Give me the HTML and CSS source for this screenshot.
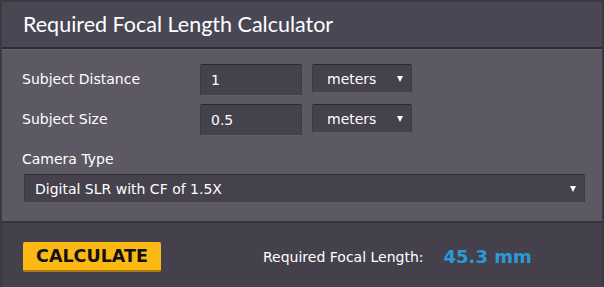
FILE: index.html
```html
<!DOCTYPE html>
<html>
<head>
  <title>Required Focal Length Calculator</title>
  <link rel="stylesheet" href="styles.css">
</head>
<body>
<div class="calc">
  <div class="calc-head">Required Focal Length Calculator</div>
  <div class="calc-body">
    <div class="row">
      <label class="lbl">Subject Distance</label>
      <input class="num" type="text" value="1">
      <span class="sel sel-unit"><select><option>meters</option><option>feet</option></select></span>
    </div>
    <div class="row">
      <label class="lbl">Subject Size</label>
      <input class="num" type="text" value="0.5">
      <span class="sel sel-unit"><select><option>meters</option><option>feet</option></select></span>
    </div>
    <div class="cam-lbl">Camera Type</div>
    <span class="sel sel-wide"><select><option>Digital SLR with CF of 1.5X</option></select></span>
  </div>
  <div class="calc-foot">
    <button class="btn">CALCULATE</button>
    <span class="res-lbl">Required Focal Length:</span>
    <span class="res-val">45.3 mm</span>
  </div>
</div>
</body>
</html>
```

FILE: styles.css
```css
* { box-sizing: border-box; }

html, body { margin: 0; padding: 0; }
body {
  background: #3c3a41;
  padding: 2px 0 0 2px;
  font-family: "DejaVu Sans", Verdana, sans-serif;
  color: #fff;
}

.calc { width: 600px; background: #5c5864; }

.calc-head {
  height: 47px;
  background: #4a4755;
  border-bottom: 2px solid #2e2c33;
  padding: 0 0 0 21px;
  font-family: Lato, "Open Sans", sans-serif;
  font-size: 21.5px;
  line-height: 44px;
  color: #fff;
}

.calc-body {
  border-top: 1px solid #69656f;
  padding: 14px 20px 18px 20px;
}

.row { display: flex; align-items: flex-start; margin-bottom: 8px; height: 32px; }
.lbl { width: 178px; font-size: 14px; line-height: 30px; }

.num, .sel select {
  background: #45424d;
  color: #fff;
  border: 1px solid #3d3a44;
  border-top-color: #2a2830;
  border-bottom-color: #625e69;
  border-radius: 2px;
  font-family: "DejaVu Sans", Verdana, sans-serif;
  font-size: 14px;
  outline: none;
}

.num { width: 102px; height: 32px; padding: 0 10px; }

.sel { position: relative; display: inline-block; }
.sel select { appearance: none; -webkit-appearance: none; width: 100%; height: 100%; padding: 0 14px; }
.sel::after {
  content: "";
  position: absolute;
  top: 50%;
  margin-top: -3px;
  right: 9px;
  border-left: 3px solid transparent;
  border-right: 3px solid transparent;
  border-top: 6px solid #fff;
  pointer-events: none;
}

.sel-unit { width: 100px; height: 29px; margin-left: 10px; }

.cam-lbl { font-size: 14px; margin-top: 14px; line-height: 18px; }

.sel-wide { display: block; width: 561px; height: 29px; margin-top: 6px; margin-left: 2px; }
.sel-wide select { padding: 0 10px; }

.calc-foot {
  border-top: 2px solid #36343c;
  background: #44414c;
  height: 70px;
  display: flex;
  align-items: flex-start;
  padding: 19px 0 0 21px;
}

.btn {
  width: 138px;
  height: 30px;
  background: #fdb913;
  border: none;
  border-bottom: 2px solid #a97a12;
  border-radius: 2px;
  font-family: "DejaVu Sans", Verdana, sans-serif;
  font-weight: bold;
  font-size: 17.5px;
  color: #111;
  padding: 0;
}

.res-lbl { margin-left: 102px; font-size: 14px; line-height: 30px; }
.res-val { margin-left: 20px; font-size: 18px; font-weight: bold; color: #2b9ad8; line-height: 30px; }
```
